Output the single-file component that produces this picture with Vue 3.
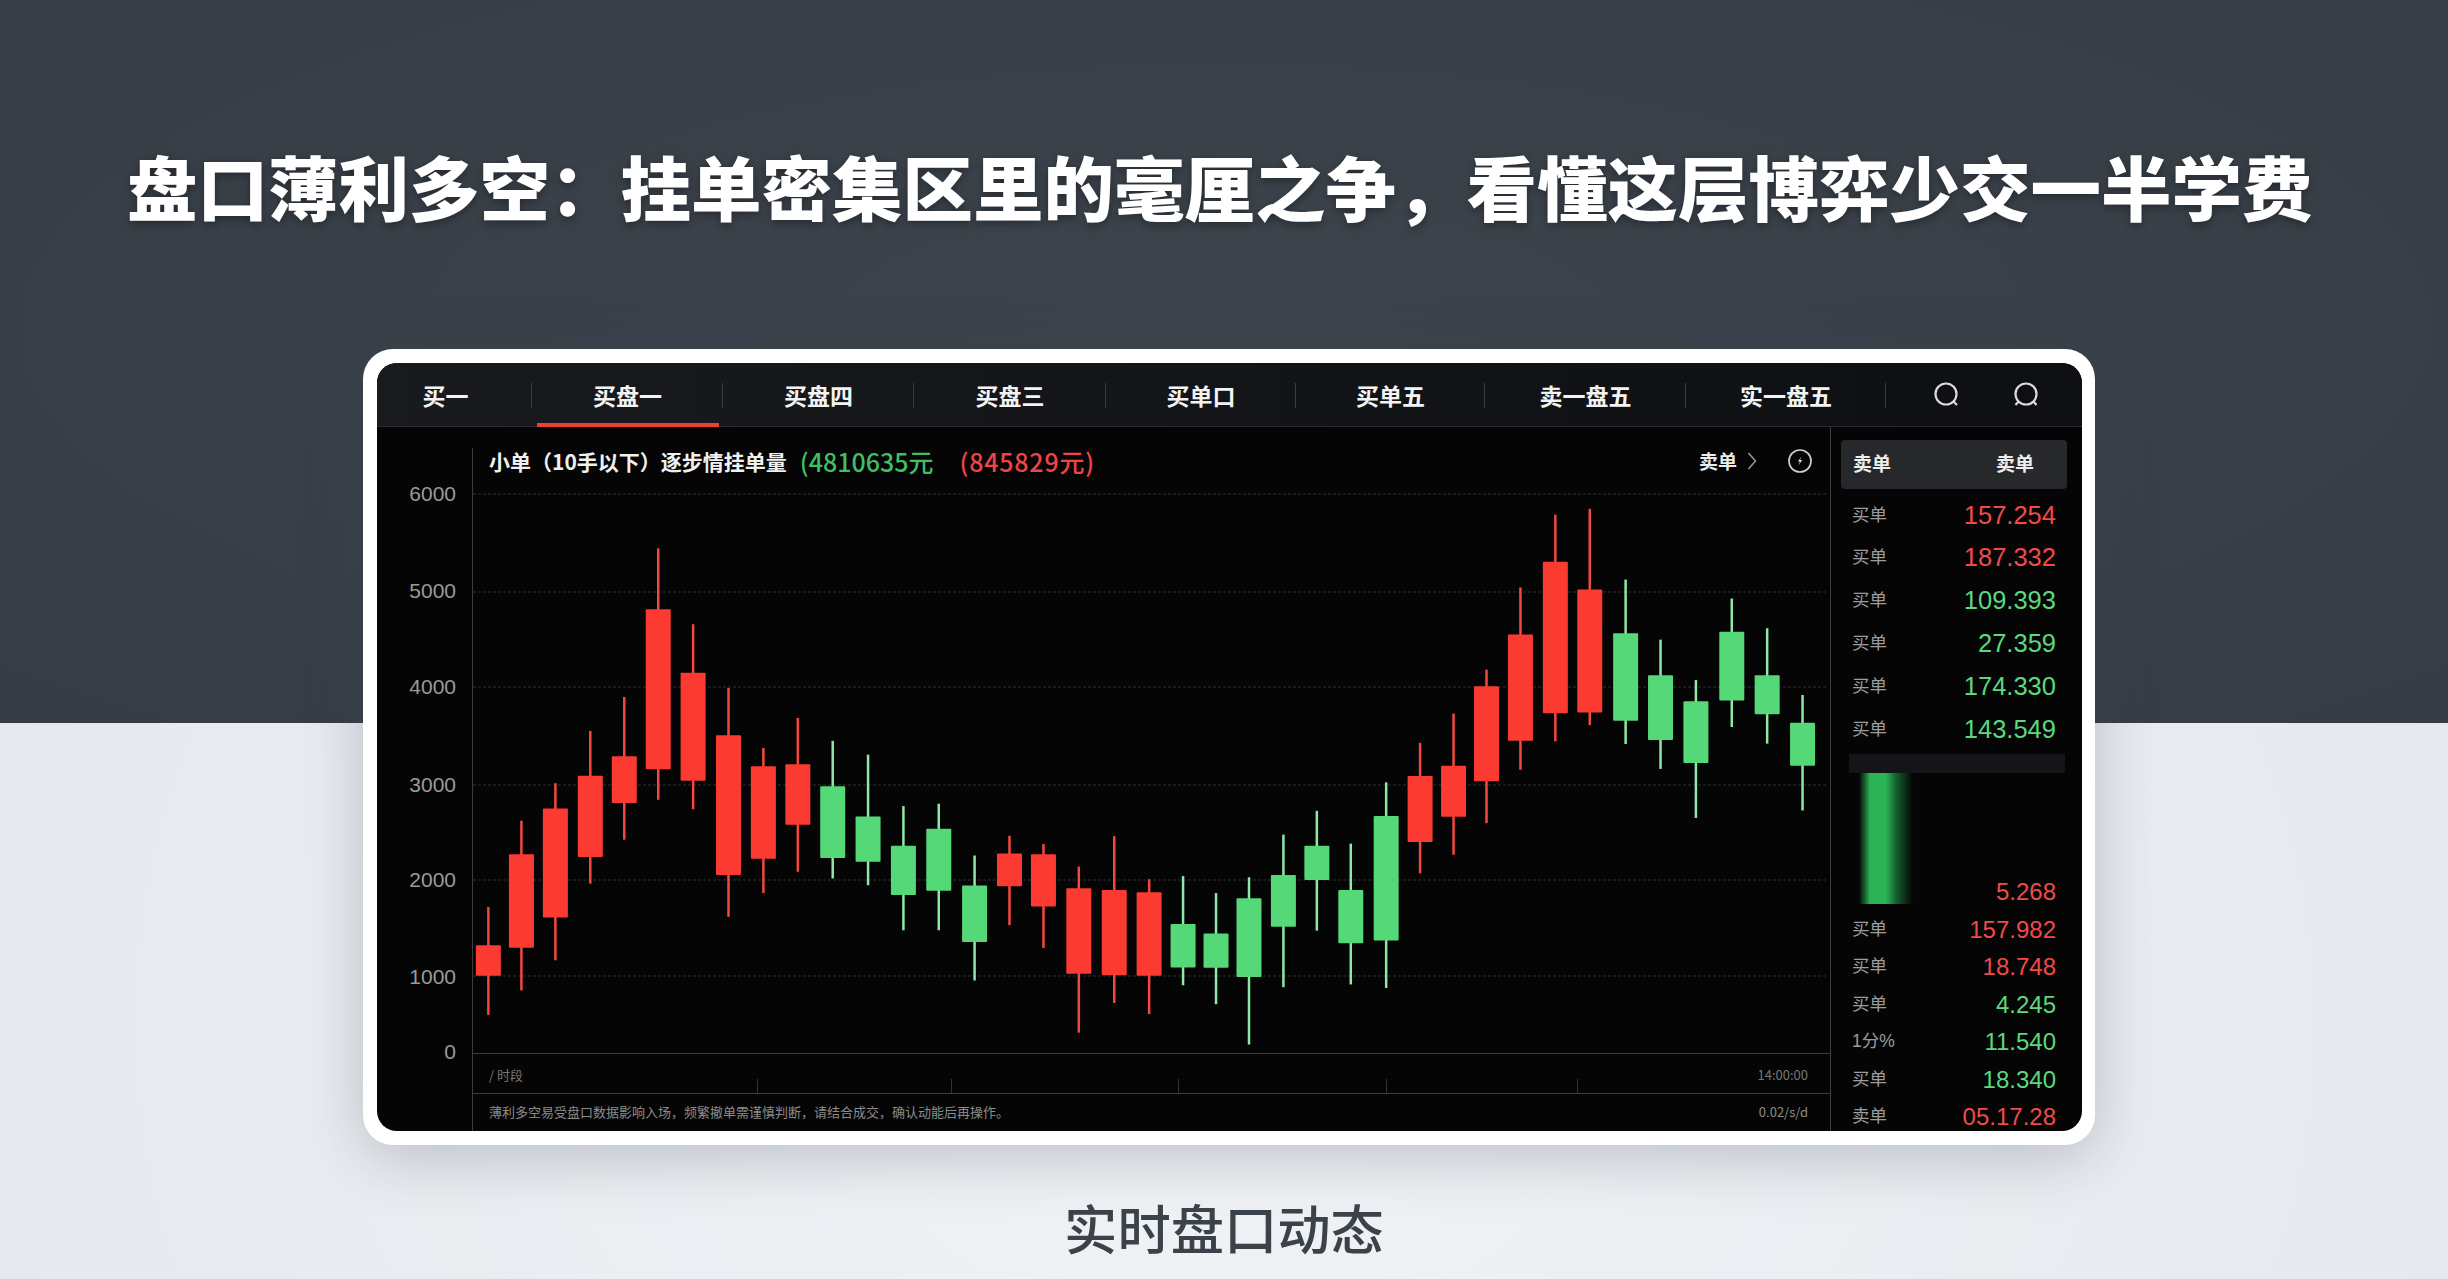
<template>
  <div class="page">
    <h1 class="title">盘口薄利多空：挂单密集区里的毫厘之争，看懂这层博弈少交一半学费</h1>

    <div class="card">
      <div class="screen">
        <nav class="tabs">
          <div v-for="(t, i) in tabs" :key="i" class="tab" :class="{ active: i === 1 }">{{ t }}</div>
          <div class="tab-icons">
            <svg width="28" height="28" viewBox="0 0 28 28" class="ico">
              <circle cx="13" cy="13" r="10.500" />
              <path d="M20.500 20.500l3.500 3.500" />
            </svg>
            <svg width="28" height="28" viewBox="0 0 28 28" class="ico">
              <circle cx="14" cy="13" r="10.500" />
              <path d="M6.500 20.500l-3 3.500M21.500 20.500l3 3.500" />
            </svg>
          </div>
        </nav>

        <div class="body">
          <section class="main">
            <div class="chart-head">
              <span class="head-label">小单（10手以下）逐步情挂单量</span>
              <span class="head-green">(4810635元</span>
              <span class="head-red">(845829元)</span>
              <span class="head-right">
                卖单
                <svg width="10" height="20" viewBox="0 0 10 20" class="chev"><path d="M1.500 2l7 8-7 8" /></svg>
                <svg width="26" height="26" viewBox="0 0 26 26" class="bolt">
                  <circle cx="13" cy="13" r="11" />
                  <path class="spark" d="M14.500 8.500l-3.500 5h2l-1.500 4 3.500-5.500h-2z" />
                </svg>
              </span>
            </div>

            <svg class="plot" width="1453" height="574" viewBox="377 480 1453 574">
              <line x1="472.500" y1="480" x2="472.500" y2="1054" class="axis" />
              <line v-for="y in grid" :key="y" x1="473" :y1="y" x2="1826" :y2="y" class="grid" />
              <line x1="473" y1="1053.500" x2="1830" y2="1053.500" class="axis" />
              <text v-for="l in yLabels" :key="l.t" x="456" :y="l.y + 5.500" class="y-label">{{ l.t }}</text>
              <g v-for="(c, i) in candles" :key="i" :class="c.up ? 'up' : 'down'">
                <line :x1="c.x" :y1="c.wt" :x2="c.x" :y2="c.wb" class="wick" />
                <rect :x="c.x - 12.500" :y="c.bt" width="25" :height="c.bb - c.bt" rx="1" class="candle" />
              </g>
            </svg>

            <div class="time-row">
              <span>/ 时段</span>
              <span>14:00:00</span>
              <i v-for="x in ticks" :key="x" class="tick" :style="{ left: x + 'px' }"></i>
            </div>
            <div class="foot-row">
              <span>薄利多空易受盘口数据影响入场，频繁撤单需谨慎判断，请结合成交，确认动能后再操作。</span>
              <span>0.02/s/d</span>
            </div>
          </section>

          <aside class="side">
            <div class="side-head"><span>卖单</span><span>卖单</span></div>
            <div class="rows top-rows">
              <div v-for="(r, i) in topRows" :key="i" class="row">
                <span class="row-label">买单</span>
                <span :class="r.up ? 'green' : 'red'">{{ r.v }}</span>
              </div>
            </div>
            <div class="depth-bar"></div>
            <div class="depth">
              <span class="red">5.268</span>
            </div>
            <div class="rows bottom-rows">
              <div v-for="(r, i) in bottomRows" :key="i" class="row">
                <span class="row-label">{{ r.l }}</span>
                <span :class="r.up ? 'green' : 'red'">{{ r.v }}</span>
              </div>
            </div>
          </aside>
        </div>
      </div>
    </div>

    <p class="caption">实时盘口动态</p>
  </div>
</template>

<script setup>
const tabs = ['买一', '买盘一', '买盘四', '买盘三', '买单口', '买单五', '卖一盘五', '实一盘五']

const grid = [494, 592, 687, 785, 880, 976]
const yLabels = [
  { t: '6000', y: 495 },
  { t: '5000', y: 592 },
  { t: '4000', y: 688 },
  { t: '3000', y: 786 },
  { t: '2000', y: 881 },
  { t: '1000', y: 978 },
  { t: '0', y: 1053 }
]

// measured off the reference: x, wick top, body top, body bottom, wick bottom, rising?
const leftPart = [
  [236, 1105, 1202, 1279, 1378, 0],
  [308, 887, 972, 1208, 1316, 0],
  [382, 792, 856, 1132, 1240, 0],
  [458, 660, 773, 979, 1046, 0],
  [532, 574, 724, 842, 935, 0],
  [606, 198, 352, 757, 834, 0],
  [682, 390, 513, 786, 858, 0],
  [759, 551, 671, 1024, 1130, 0],
  [835, 703, 749, 983, 1070, 0],
  [910, 627, 744, 897, 1016, 0],
  [986, 685, 800, 981, 1033, 1],
  [1063, 720, 876, 991, 1050, 1],
  [1140, 850, 950, 1075, 1164, 1],
  [1217, 844, 907, 1064, 1164, 1],
  [1295, 975, 1051, 1194, 1291, 1],
  [1371, 925, 970, 1053, 1151, 0],
  [1445, 946, 972, 1104, 1209, 0],
  [1522, 1003, 1058, 1274, 1423, 0]
]
const rightPart = [
  [50, 926, 1062, 1278, 1348, 0],
  [122, 1035, 1068, 1279, 1376, 0],
  [192, 1027, 1148, 1258, 1303, 1],
  [260, 1070, 1172, 1259, 1351, 1],
  [328, 1030, 1083, 1282, 1453, 1],
  [399, 922, 1024, 1155, 1308, 1],
  [468, 862, 950, 1037, 1165, 1],
  [538, 945, 1062, 1197, 1301, 1],
  [611, 790, 875, 1190, 1310, 1],
  [681, 690, 774, 941, 1020, 0],
  [750, 616, 748, 877, 973, 0],
  [818, 505, 547, 787, 893, 0],
  [888, 297, 416, 685, 758, 0],
  [960, 113, 232, 615, 686, 0],
  [1031, 98, 302, 613, 645, 0],
  [1105, 277, 413, 634, 693, 1],
  [1177, 429, 519, 683, 756, 1],
  [1250, 531, 585, 741, 880, 1],
  [1324, 325, 409, 583, 650, 1],
  [1397, 400, 519, 618, 692, 1],
  [1470, 569, 639, 748, 861, 1]
]

const toCandle = (originX, scaleX) => ([x, wt, bt, bb, wb, up]) => ({
  x: originX + x / scaleX,
  wt: 470 + wt / 2.529,
  bt: 470 + bt / 2.529,
  bb: 470 + bb / 2.529,
  wb: 470 + wb / 2.529,
  up: !!up
})

const candles = [...leftPart.map(toCandle(380, 2.178)), ...rightPart.map(toCandle(1090, 2.063))]

const ticks = [284, 478, 705, 913, 1104]

const topRows = [
  { v: '157.254', up: false },
  { v: '187.332', up: false },
  { v: '109.393', up: true },
  { v: '27.359', up: true },
  { v: '174.330', up: true },
  { v: '143.549', up: true }
]

const bottomRows = [
  { l: '买单', v: '157.982', up: false },
  { l: '买单', v: '18.748', up: false },
  { l: '买单', v: '4.245', up: true },
  { l: '1分%', v: '11.540', up: true },
  { l: '买单', v: '18.340', up: true },
  { l: '卖单', v: '05.17.28', up: false }
]
</script>

<style>
body {
  margin: 0;
}
</style>

<style scoped>
.page {
  width: 2448px;
  height: 1279px;
  overflow: hidden;
  font-family: "Noto Sans CJK SC", "Liberation Sans", sans-serif;
  background:
    radial-gradient(ellipse at 50% 45%, #3d444c 0, #353c44 100%) top / 100% 723px no-repeat,
    radial-gradient(ellipse at 50% 80%, #f1f3f6 0, #e1e6eb 100%);
}

.title {
  margin: 0;
  height: 349px;
  box-sizing: border-box;
  padding-top: 134px;
  padding-left: 127px;
  font-size: 70.500px;
  line-height: 102px;
  font-weight: 900;
  color: #fff;
  white-space: nowrap;
  text-shadow: 0 3px 8px rgba(0, 0, 0, 0.35);
}

.card {
  margin-left: 363px;
  width: 1732px;
  height: 796px;
  box-sizing: border-box;
  padding: 14px 13px 14px 14px;
  background: #fff;
  border-radius: 30px;
  box-shadow: 0 12px 60px rgba(60, 70, 85, 0.28);
}

.screen {
  height: 768px;
  background: #050505;
  border-radius: 20px;
  overflow: hidden;
}

.tabs {
  display: grid;
  grid-template-columns: 155px 191px 191px 192px 190px 189px 201px 200px 1fr;
  height: 64px;
  background: linear-gradient(90deg, #181a1e, #0d0f12);
  border-bottom: 1px solid #2a2c30;
  box-sizing: border-box;
}

.tab {
  position: relative;
  display: flex;
  align-items: center;
  justify-content: center;
  font-size: 23px;
  font-weight: 700;
  color: #f3f3f3;
}

.tab:first-child {
  padding-right: 18px;
}

.tab::after {
  content: "";
  position: absolute;
  right: 0;
  top: 20px;
  height: 25px;
  width: 1px;
  background: #3a3c40;
}

.tab.active::before {
  content: "";
  position: absolute;
  left: 5px;
  right: 4px;
  bottom: -1px;
  height: 4px;
  background: #ee4037;
}

.tab-icons {
  display: flex;
  align-items: center;
  padding-left: 47px;
  gap: 51px;
}

.ico {
  fill: none;
  stroke: #dcdcdc;
  stroke-width: 2.200;
}

.body {
  display: flex;
  height: 704px;
}

.main {
  width: 1453px;
  border-right: 1px solid #3b3d40;
  flex: none;
  display: flex;
  flex-direction: column;
  box-sizing: content-box;
}

.chart-head {
  flex: none;
  margin: 21px 0 0 95px;
  height: 32px;
  padding-left: 16px;
  padding-right: 17px;
  border-left: 1px solid #3b3d40;
  display: flex;
  align-items: flex-start;
  font-size: 21px;
  line-height: 26px;
  white-space: nowrap;
}

.head-label {
  color: #f0f0f0;
  font-weight: 700;
}

.head-green,
.head-red {
  font-size: 25px;
  font-weight: 500;
}

.head-green {
  color: #3fbf63;
  margin-left: 13px;
}

.head-red {
  color: #ef4444;
  margin-left: 26px;
  letter-spacing: 0.800px;
}

.head-right {
  margin-left: auto;
  display: flex;
  align-items: center;
  color: #ececec;
  font-size: 19px;
  font-weight: 700;
}

.chev {
  margin: 0 30px 0 10px;
  fill: none;
  stroke: #999;
  stroke-width: 1.500;
}

.bolt {
  fill: none;
  stroke: #cfcfcf;
  stroke-width: 1.700;
}

.bolt .spark {
  fill: #eee;
  stroke: none;
}

.plot {
  display: block;
  flex: none;
  overflow: visible;
}

.plot .axis {
  stroke: #3b3d40;
  stroke-width: 1;
}

.plot .grid {
  stroke: #303030;
  stroke-width: 1;
  stroke-dasharray: 3 2;
}

.y-label {
  fill: #9a9a9a;
  font-size: 21px;
  text-anchor: end;
  font-family: "Liberation Sans", sans-serif;
}

.up .wick {
  stroke: #8ee8a6;
}

.down .wick {
  stroke: #f4483e;
}

.wick {
  stroke-width: 2.500;
}

.up .candle {
  fill: #55d878;
}

.down .candle {
  fill: #fb3a32;
}

.time-row,
.foot-row {
  position: relative;
  margin-left: 95px;
  border-left: 1px solid #3b3d40;
  display: flex;
  justify-content: space-between;
  padding: 0 22px 0 16px;
  color: #777;
  white-space: nowrap;
}

.time-row {
  flex: none;
  height: 40px;
  font-size: 13px;
  line-height: 42px;
  border-bottom: 1px solid #3b3d40;
  box-sizing: border-box;
}

.tick {
  position: absolute;
  bottom: 0;
  height: 14px;
  width: 1px;
  background: #333;
}

.foot-row {
  flex: 1;
  min-height: 0;
  font-size: 13px;
  line-height: 36px;
  color: #8c8c8c;
}

.side {
  flex: 1;
  padding: 13px 15px 0 10px;
  min-width: 0;
}

.side-head {
  display: flex;
  justify-content: space-between;
  height: 49px;
  padding: 0 33px 4px 12px;
  box-sizing: border-box;
  align-items: center;
  background: #26282c;
  border-radius: 4px;
  color: #eee;
  font-size: 19px;
  font-weight: 700;
}

.rows {
  padding: 0 11px;
}

.top-rows {
  padding-top: 5px;
}

.bottom-rows {
  padding-top: 7px;
}

.row {
  display: flex;
  justify-content: space-between;
  align-items: center;
  line-height: 1;
  font-family: "Liberation Sans", "Noto Sans CJK SC", sans-serif;
}

.top-rows .row {
  height: 42.800px;
  font-size: 25.500px;
}

.bottom-rows .row {
  height: 37.500px;
  font-size: 24px;
}

.row-label {
  color: #9c9c9c;
  font-size: 17.500px;
}

.red {
  color: #f04a4a;
}

.green {
  color: #5ad97e;
}

.depth-bar {
  height: 19px;
  margin: 3px 2px 0 8px;
  background: #141518;
}

.depth {
  height: 131px;
  margin: 0 11px 0 8px;
  display: flex;
  align-items: flex-end;
  justify-content: flex-end;
  font-family: "Liberation Sans", sans-serif;
  font-size: 24px;
  line-height: 24px;
  background: linear-gradient(90deg, transparent 10px, #2bb355 21px, #2bb355 37px, #14602e 47px, transparent 64px) no-repeat;
}

.caption {
  margin: 0;
  padding-top: 43px;
  text-align: center;
  font-size: 53.300px;
  font-weight: 500;
  line-height: 78px;
  color: #3b4249;
}
</style>
